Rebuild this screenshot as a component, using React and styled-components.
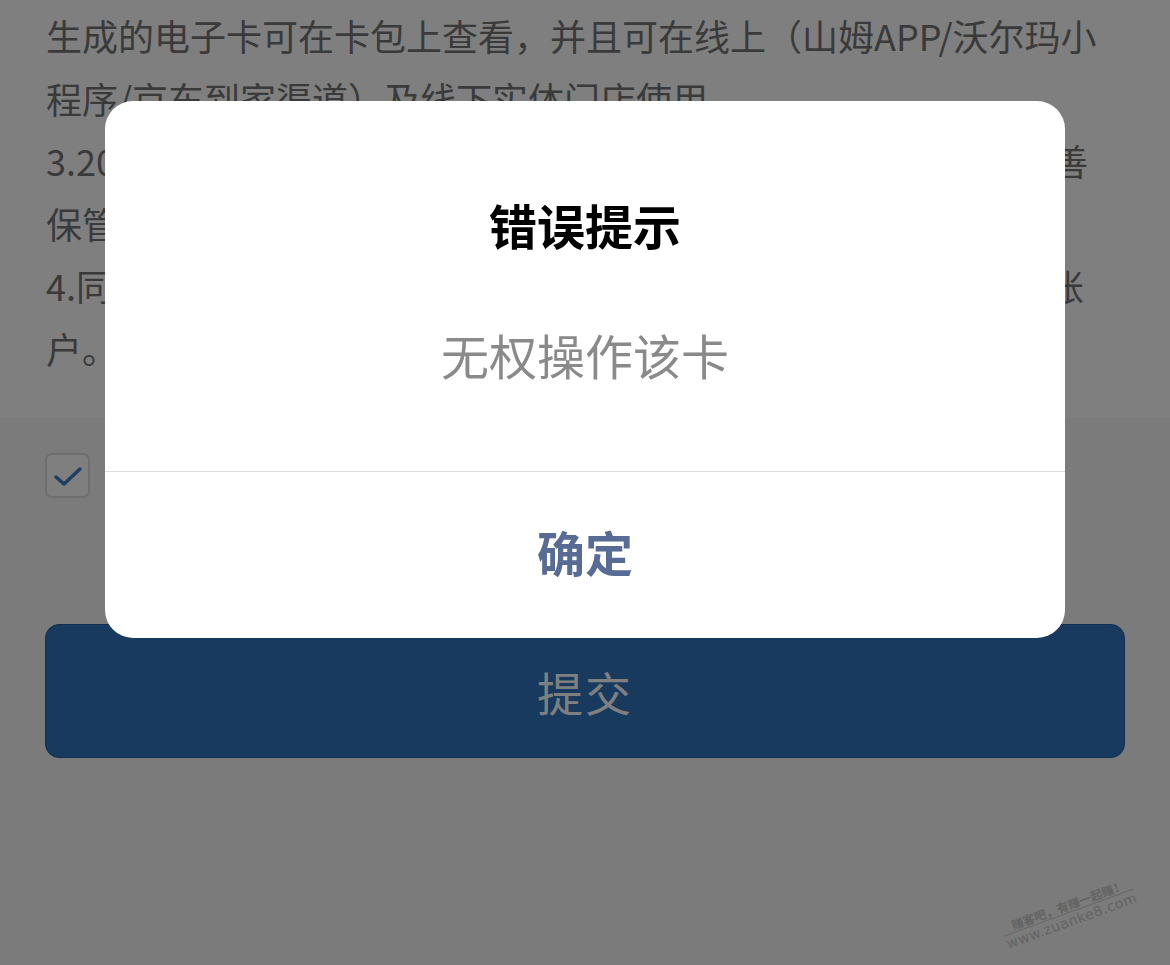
import styled, { createGlobalStyle } from "styled-components";

const GlobalStyle = createGlobalStyle`
  html, body {
    margin: 0;
    padding: 0;
  }
  body {
    font-family: "Noto Sans CJK SC", "Noto Sans", sans-serif;
    background: #f6f6f6;
  }
`;

const Page = styled.div`
  position: relative;
  min-height: 965px;
  background: #f6f6f6;
  overflow: hidden;
`;

const Notice = styled.section`
  background: #ffffff;
  padding: 4px 46px 39px;
`;

const Line = styled.div`
  font-size: 36px;
  line-height: 62.5px;
  color: #747474;
  white-space: nowrap;
`;

const Agreement = styled.section`
  padding: 35px 45px 0;
`;

const CheckRow = styled.label`
  display: flex;
  align-items: flex-start;
  gap: 16px;
  font-size: 36px;
  color: #747474;
  line-height: 45px;
`;

const CheckBox = styled.span`
  flex: none;
  width: 41px;
  height: 41px;
  border: 2px solid #dcdcdc;
  border-radius: 7px;
  background: #ffffff;
  display: flex;
  align-items: center;
  justify-content: center;
`;

const Submit = styled.button`
  display: block;
  width: 100%;
  height: 134px;
  margin-top: 126px;
  border: 1px solid #24609e;
  border-radius: 14px;
  background: #2e74bc;
  color: #ffffff;
  font-family: inherit;
  font-size: 46px;
  letter-spacing: 2px;
`;

const Watermark = styled.div`
  position: absolute;
  right: 32px;
  bottom: 36px;
  transform: rotate(-20deg);
  transform-origin: center;
  color: #9a9a9a;
  font-weight: 700;
  line-height: 1.15;
  text-align: center;
  opacity: 0.5;
`;

const WmTop = styled.div`
  font-size: 12px;
  border-bottom: 1px solid #aaa;
  padding-left: 4px;
`;

const WmBottom = styled.div`
  font-family: "DejaVu Sans", sans-serif;
  font-size: 14px;
  font-weight: 400;
  letter-spacing: 0.5px;
`;

const Mask = styled.div`
  position: fixed;
  inset: 0;
  background: rgba(0, 0, 0, 0.5);
  display: flex;
  justify-content: center;
  align-items: flex-start;
  padding-top: 101px;
`;

const Dialog = styled.div`
  width: 960px;
  background: #ffffff;
  border-radius: 28px;
  overflow: hidden;
`;

const DialogBody = styled.div`
  padding: 90px 40px 83px;
  display: flex;
  flex-direction: column;
  align-items: center;
  gap: 63px;
  border-bottom: 1px solid #dedede;
`;

const Title = styled.h2`
  margin: 0;
  font-size: 48px;
  line-height: 67px;
  font-weight: 700;
  color: #000000;
`;

const Message = styled.p`
  margin: 0;
  font-size: 48px;
  line-height: 67px;
  color: #8a8a8a;
`;

const Confirm = styled.button`
  display: block;
  width: 100%;
  height: 166px;
  padding: 0 0 9px;
  border: 0;
  background: transparent;
  font-family: inherit;
  font-size: 48px;
  font-weight: 700;
  color: #576b95;
`;

const lines = [
  "生成的电子卡可在卡包上查看，并且可在线上（山姆APP/沃尔玛小",
  "程序/京东到家渠道）及线下实体门店使用。",
  "3.20元电子卡仅限本人使用，生成后卡号及密码请您注意自行妥善",
  "保管，如因个人原因导致卡号泄露，造成损失由用户自行承担。",
  "4.同一用户每日限兑换一次，电子卡将发放至您当前登录的会员账",
  "户。",
];

const App = () => {
  return (
    <Page>
      <GlobalStyle />
      <Notice>
        {lines.map((t) => (
          <Line key={t}>{t}</Line>
        ))}
      </Notice>
      <Agreement>
        <CheckRow>
          <CheckBox>
            <svg width="30" height="22" viewBox="0 0 30 22">
              <path
                d="M3 12 L11 19 L27 4"
                fill="none"
                stroke="#3a7fc8"
                strokeWidth="3.5"
                strokeLinecap="round"
                strokeLinejoin="round"
              />
            </svg>
          </CheckBox>
          <span>我已阅读并同意《电子卡兑换规则》</span>
        </CheckRow>
        <Submit>提交</Submit>
      </Agreement>
      <Watermark>
        <WmTop>赚客吧，有赚一起赚！</WmTop>
        <WmBottom>www.zuanke8.com</WmBottom>
      </Watermark>
      <Mask>
        <Dialog>
          <DialogBody>
            <Title>错误提示</Title>
            <Message>无权操作该卡</Message>
          </DialogBody>
          <Confirm>确定</Confirm>
        </Dialog>
      </Mask>
    </Page>
  );
};

export default App;
